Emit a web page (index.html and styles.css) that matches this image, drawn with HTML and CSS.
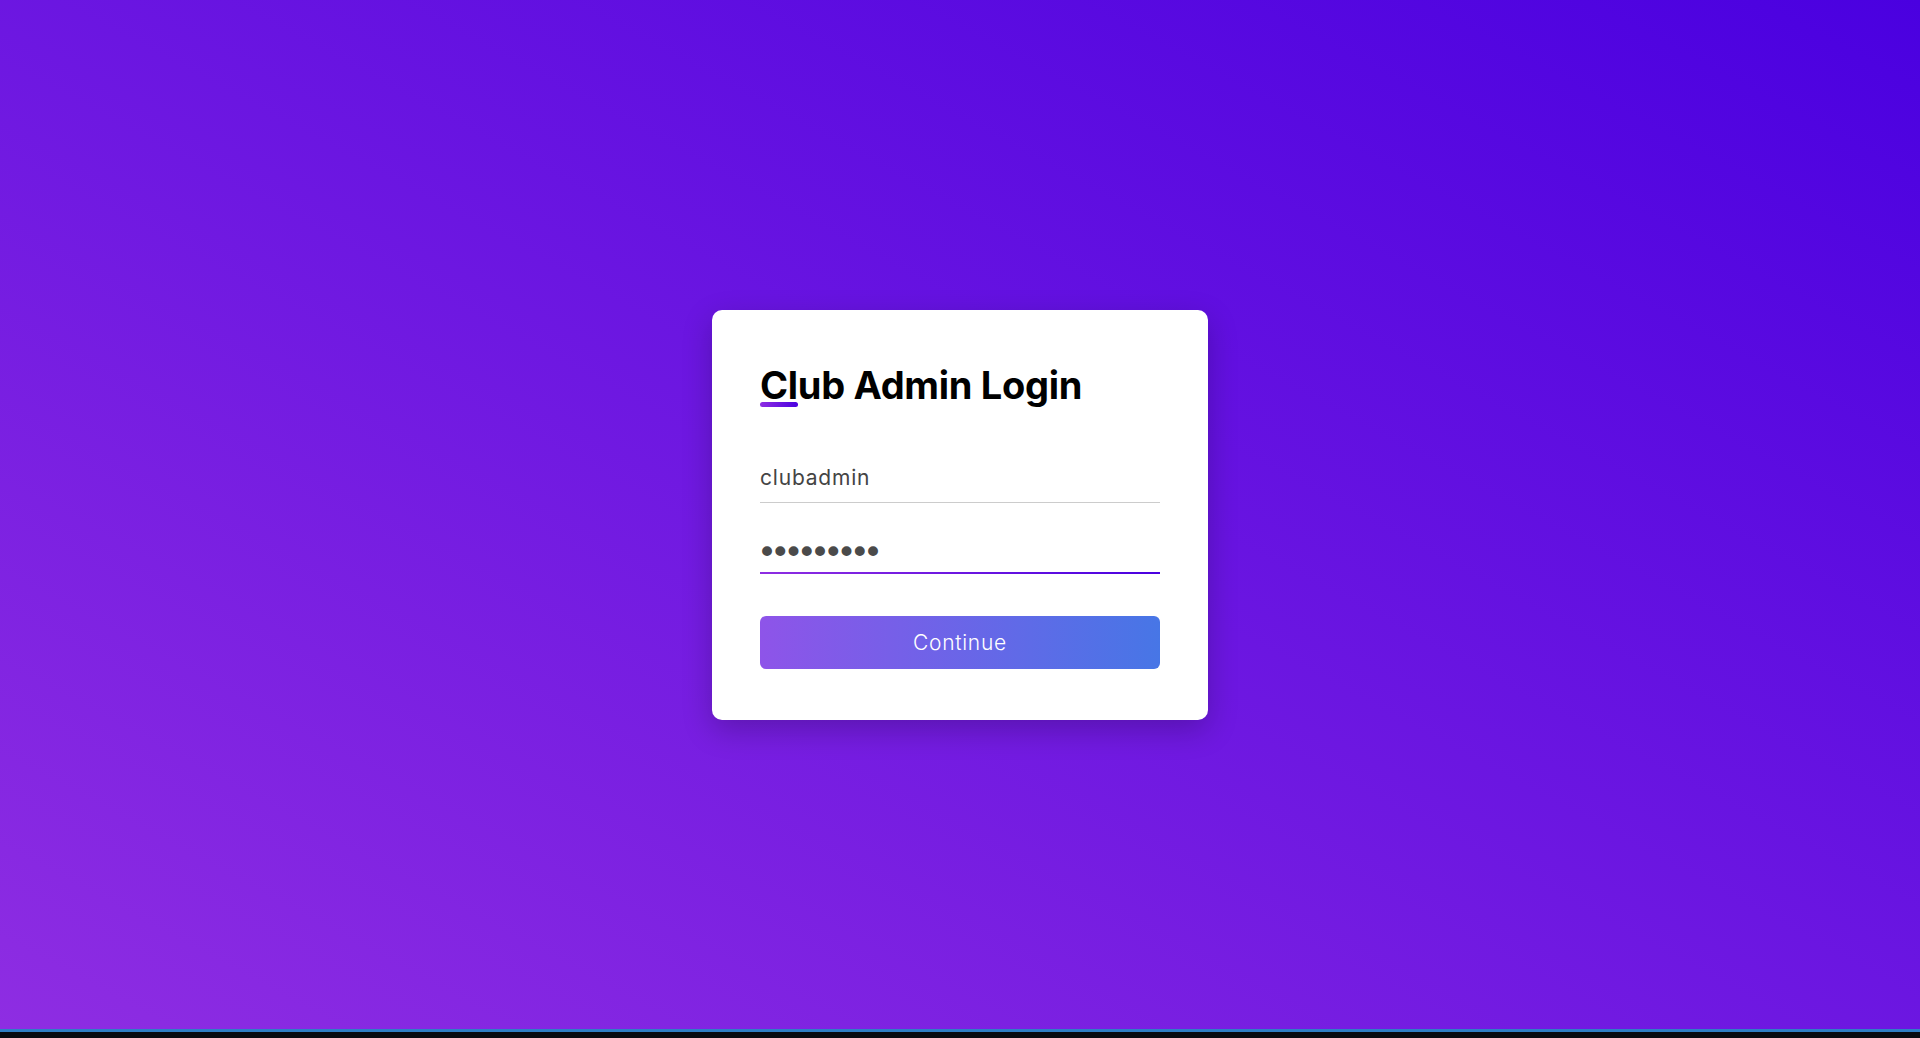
FILE: index.html
```html
<!DOCTYPE html>
<html lang="en">
<head>
<meta charset="utf-8">
<title>Club Admin Login</title>
<link rel="stylesheet" href="styles.css">
</head>
<body>
<main class="stage">
  <form class="card">
    <h2 class="title">Club Admin Login</h2>
    <input class="field" type="text" value="clubadmin">
    <input class="field field-focus" type="password" value="password1">
    <button class="btn" type="button">Continue</button>
  </form>
</main>
<div class="taskbar"></div>
</body>
</html>
```
FILE: styles.css
```css
html, body {
  margin: 0;
  height: 100%;
}
body {
  display: flex;
  flex-direction: column;
  font-family: "Inter", "Noto Sans", sans-serif;
  background: #0a0e14;
}
.stage {
  flex: 1;
  display: flex;
  align-items: center;
  justify-content: center;
  background: linear-gradient(to top right, #8e2de2, #4a00e0);
}
.taskbar {
  height: 6px;
  border-top: 3px solid #2f7fc4;
  background: #080b10;
}
.card {
  width: 400px;
  padding: 52px 48px 51px;
  background: #fff;
  border-radius: 10px;
  box-shadow: 0 10px 30px rgba(0, 0, 0, 0.22);
  display: flex;
  flex-direction: column;
}
.title {
  position: relative;
  margin: 0 0 49px;
  font-size: 38px;
  line-height: 46px;
  height: 46px;
  font-weight: 700;
  color: #000;
  letter-spacing: -0.3px;
}
.title::after {
  content: "";
  position: absolute;
  left: 0;
  bottom: 1px;
  width: 38px;
  height: 5px;
  border-radius: 3px;
  background: linear-gradient(to right, #8e2de2, #4a00e0);
}
.field {
  font-family: inherit;
  font-size: 21px;
  line-height: 26px;
  height: 46px;
  box-sizing: border-box;
  letter-spacing: 0.8px;
  color: #444;
  border: none;
  border-bottom: 1px solid #ccc;
  padding: 8px 0 11px;
  margin: 0;
  outline: none;
  background: transparent;
}
.field-focus {
  margin-top: 25px;
  height: 48px;
  padding: 11px 0 9px;
  font-family: "DejaVu Sans", sans-serif;
  font-size: 34px;
  letter-spacing: -6.8px;
  text-indent: -3px;
  color: #4a4a4a;
  border-bottom: 2px solid transparent;
  background: linear-gradient(to right, #8e2de2, #4a00e0) bottom / 100% 2px no-repeat;
}
.btn {
  margin-top: 40px;
  height: 53px;
  border: none;
  border-radius: 6px;
  background: linear-gradient(to right, #8e54e9, #4776e6);
  color: #fff;
  font-family: inherit;
  font-size: 21px;
  font-weight: 300;
  letter-spacing: 0.7px;
  cursor: pointer;
}
```
